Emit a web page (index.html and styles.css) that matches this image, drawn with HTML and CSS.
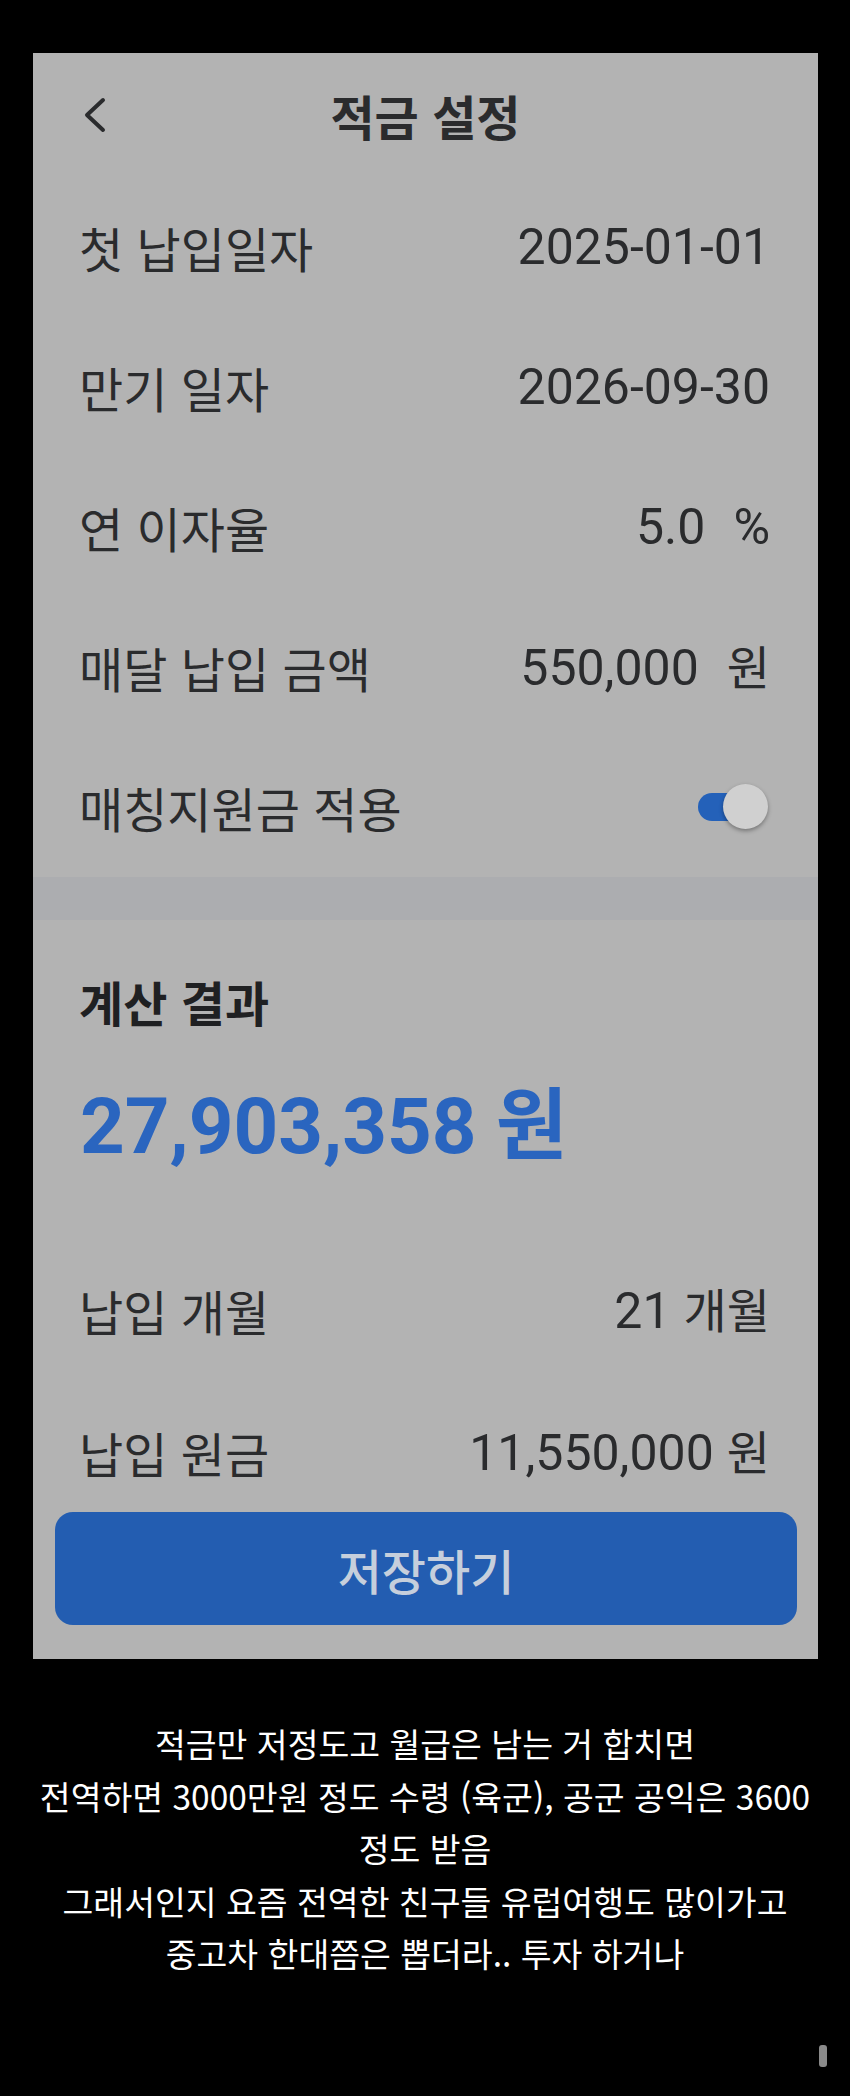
FILE: index.html
```html
<!DOCTYPE html>
<html lang="ko">
<head>
<meta charset="utf-8">
<title>적금 설정</title>
<link rel="stylesheet" href="styles.css">
</head>
<body>
<div class="page">
  <div class="top-gap"></div>
  <main class="panel">
    <header class="header">
      <div class="back">
        <svg class="chev" width="24" height="38" viewBox="0 0 24 38" aria-hidden="true"><path d="M19 4 L3 19 L19 34" fill="none" stroke="#2a2b2d" stroke-width="4" stroke-linecap="round" stroke-linejoin="round"/></svg>
      </div>
      <h1 class="title">적금 설정</h1>
      <div></div>
    </header>
    <section class="settings">
      <div class="row"><span class="label">첫 납입일자</span><span class="value">2025-01-01</span></div>
      <div class="row"><span class="label">만기 일자</span><span class="value">2026-09-30</span></div>
      <div class="row"><span class="label">연 이자율</span><span class="value">5.0<span class="gap"></span>%</span></div>
      <div class="row"><span class="label">매달 납입 금액</span><span class="value">550,000<span class="gap"></span><span class="unit">원</span></span></div>
      <div class="row"><span class="label">매칭지원금 적용</span>
        <span class="toggle"><span class="track"></span><span class="thumb"></span></span>
      </div>
    </section>
    <div class="band"></div>
    <section class="result">
      <h2 class="section-title">계산 결과</h2>
      <div class="total">27,903,358 원</div>
      <div class="result-list">
        <div class="rrow"><span class="label">납입 개월</span><span class="value">21<span class="sp"></span><span class="unit">개월</span></span></div>
        <div class="rrow"><span class="label">납입 원금</span><span class="value">11,550,000<span class="sp"></span><span class="unit">원</span></span></div>
      </div>
      <button class="save">저장하기</button>
    </section>
  </main>
  <p class="caption">적금만 저정도고 월급은 남는 거 합치면<br>전역하면 3000만원 정도 수령 (육군), 공군 공익은 3600<br>정도 받음<br>그래서인지 요즘 전역한 친구들 유럽여행도 많이가고<br>중고차 한대쯤은 뽑더라.. 투자 하거나</p>
  <div class="scroll-ind"></div>
</div>
</body>
</html>
```
FILE: styles.css
```css
html, body {
  margin: 0;
  padding: 0;
  background: #000;
}
.page {
  position: relative;
  width: 850px;
  height: 2096px;
  overflow: hidden;
  background: #000;
  font-family: "Noto Sans CJK KR", sans-serif;
}
.top-gap {
  height: 53px;
}
.panel {
  margin-left: 33px;
  width: 785px;
  background: #b3b3b3;
  color: #2a2b2d;
  padding-bottom: 34px;
}
.header {
  height: 124px;
  display: grid;
  grid-template-columns: 1fr auto 1fr;
  align-items: center;
}
.back {
  padding-left: 51px;
  display: flex;
  align-items: center;
}
.title {
  margin: 0;
  font-size: 48px;
  font-weight: 700;
  line-height: 1;
  color: #2a2b2d;
}
.settings {
  display: flex;
  flex-direction: column;
}
.row {
  height: 140px;
  padding: 0 48px 0 46px;
  display: flex;
  align-items: center;
  justify-content: space-between;
}
.label {
  font-size: 48px;
  line-height: 1;
  font-weight: 400;
}
.value {
  font-family: Roboto, "Noto Sans CJK KR", sans-serif;
  font-size: 50px;
  line-height: 1;
  display: flex;
  align-items: baseline;
}
.value .unit {
  font-family: "Noto Sans CJK KR", sans-serif;
  font-size: 47px;
}
.gap {
  display: inline-block;
  width: 28px;
}
.sp {
  display: inline-block;
  width: 13px;
}
.toggle {
  position: relative;
  width: 70px;
  height: 46px;
  margin-right: 2px;
}
.track {
  position: absolute;
  left: 0;
  top: 9px;
  width: 62px;
  height: 28px;
  border-radius: 14px;
  background: #2461b9;
}
.thumb {
  position: absolute;
  right: 0;
  top: 0;
  width: 45px;
  height: 45px;
  border-radius: 50%;
  background: #d0d0d0;
  box-shadow: 0 2px 4px rgba(0, 0, 0, 0.35);
}
.band {
  height: 43px;
  background: #acadb0;
}
.result {
  padding-top: 40px;
  display: flex;
  flex-direction: column;
}
.section-title {
  margin: 0;
  padding-left: 46px;
  font-size: 48px;
  font-weight: 700;
  line-height: 82px;
  color: #1f2022;
}
.total {
  margin-top: 35px;
  padding-left: 47px;
  font-family: Roboto, "Noto Sans CJK KR", sans-serif;
  font-size: 78px;
  font-weight: 700;
  line-height: 100px;
  color: #2a65bf;
}
.result-list {
  margin-top: 103px;
  display: flex;
  flex-direction: column;
  gap: 82px;
}
.rrow {
  height: 60px;
  padding: 0 48px 0 46px;
  display: flex;
  align-items: center;
  justify-content: space-between;
}
.save {
  margin: 30px 21px 0 22px;
  height: 113px;
  border: none;
  border-radius: 18px;
  background: #235db1;
  color: #c6cfdc;
  font-family: "Noto Sans CJK KR", sans-serif;
  font-size: 48px;
  font-weight: 500;
  padding: 0;
}
.caption {
  margin: 58px 0 0;
  text-align: center;
  color: #fff;
  font-size: 33.5px;
  line-height: 52.5px;
  font-weight: 400;
}
.scroll-ind {
  position: absolute;
  left: 819px;
  top: 2045px;
  width: 8px;
  height: 22px;
  border-radius: 3px;
  background: #8a8a8a;
}
```
